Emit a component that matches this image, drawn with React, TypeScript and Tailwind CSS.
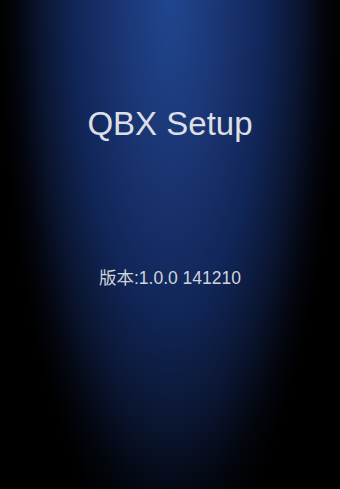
export default function App() {
  return (
    <div className="flex h-[489px] w-[340px] flex-col items-center bg-black bg-[radial-gradient(ellipse_170px_560px_at_50%_0%,#20468f_0%,#1a3471_32%,#112658_56%,#0a1530_76%,#03060e_90%,#000_100%)] pt-[107px] font-['Liberation_Sans','Noto_Sans_CJK_SC',sans-serif] text-[#dcdfe6]">
      <h1 className="text-[33px] leading-none">QBX Setup</h1>
      <p className="mt-[130px] text-[17.5px] leading-none text-[#d0d4dc]">版本:1.0.0 141210</p>
    </div>
  );
}
